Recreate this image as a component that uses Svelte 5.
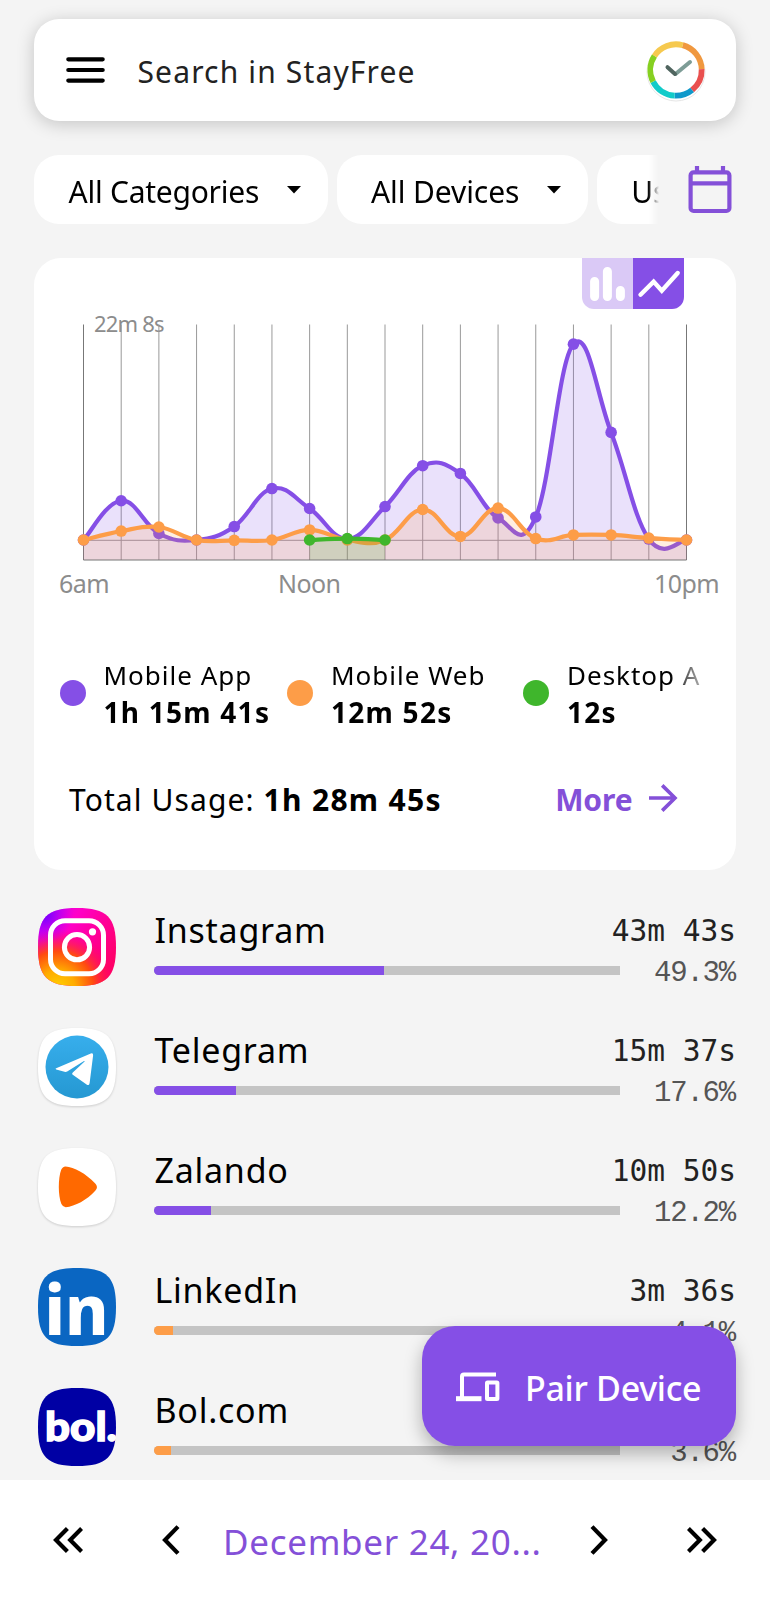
<script lang="ts">
	interface Series {
		name: string;
		total: string;
		color: string;
		start: number;
		values: number[];
	}

	const filters = ['All Categories', 'All Devices', 'Usage'];

	// usage per hour in seconds, 6am to 10pm
	const series: Series[] = [
		{
			name: 'Mobile App',
			total: '1h 15m 41s',
			color: '#854fe6',
			start: 0,
			values: [0, 242, 40, 0, 83, 317, 194, 6, 206, 458, 410, 136, 142, 1207, 663, 6, 0]
		},
		{
			name: 'Mobile Web',
			total: '12m 52s',
			color: '#fd9d48',
			start: 0,
			values: [0, 55, 80, 0, -2, 0, 62, 0, 0, 188, 22, 197, 9, 31, 31, 12, 0]
		},
		{ name: 'Desktop App', total: '12s', color: '#3fb62c', start: 6, values: [0, 9, 0] }
	];

	const apps = [
		{ id: 'instagram', name: 'Instagram', time: '43m 43s', percent: 49.3, color: '#854fe6' },
		{ id: 'telegram', name: 'Telegram', time: '15m 37s', percent: 17.6, color: '#854fe6' },
		{ id: 'zalando', name: 'Zalando', time: '10m 50s', percent: 12.2, color: '#854fe6' },
		{ id: 'linkedin', name: 'LinkedIn', time: '3m 36s', percent: 4.1, color: '#fd9d48' },
		{ id: 'bol', name: 'Bol.com', time: '', percent: 3.6, color: '#fd9d48' }
	];

	// [start angle, sweep, color], clockwise from the top
	const ring: [number, number, string][] = [
		[15, 73, '#f0983f'],
		[88, 53, '#e9504f'],
		[141, 42, '#0e98ca'],
		[183, 60, '#12cbc9'],
		[243, 60, '#86d021'],
		[303, 72, '#f6c94f']
	];

	const hours = 16;
	const left = 49.5;
	const step = 603 / hours;
	const top = 15.5;
	const zero = 231;
	const bottom = 251;
	const max = 1328;
	const squircle = 'M39 0C69 0 78 9 78 39S69 78 39 78 0 69 0 39 9 0 39 0Z';

	let chartType = $state('line');

	function toPoints(s: Series) {
		return s.values.map((v, i) => ({
			x: left + (s.start + i) * step,
			y: zero - (v / max) * (zero - top)
		}));
	}

	function curve(s: Series) {
		const p = toPoints(s);
		let d = `M${p[0].x} ${p[0].y}`;
		for (let i = 1; i < p.length; i++) {
			const before = p[Math.max(i - 2, 0)];
			const prev = p[i - 1];
			const cur = p[i];
			const next = p[Math.min(i + 1, p.length - 1)];
			d += ` C${prev.x + (cur.x - before.x) * 0.2} ${prev.y + (cur.y - before.y) * 0.2}`;
			d += ` ${cur.x - (next.x - prev.x) * 0.2} ${cur.y - (next.y - prev.y) * 0.2}`;
			d += ` ${cur.x} ${cur.y}`;
		}
		return d;
	}

	function area(s: Series) {
		const p = toPoints(s);
		return `${curve(s)} L${p[p.length - 1].x} ${bottom} L${p[0].x} ${bottom} Z`;
	}
</script>

<div class="screen">
	<header class="search">
		<button class="plain" aria-label="Menu">
			<svg width="39" height="26" viewBox="0 0 39 26" stroke="#000" stroke-width="4.2" stroke-linecap="round">
				<path d="M2.3 2.3H36.7M2.3 13H36.7M2.3 23.6H36.7" />
			</svg>
		</button>
		<span class="search-text">Search in StayFree</span>
		<svg class="logo" width="64" height="64" viewBox="0 0 64 64" fill="none">
			<circle cx="32" cy="34" r="29" fill="#fff" stroke="#e6e6e6" />
			<circle cx="32" cy="32" r="29" fill="#fff" />
			{#each ring as [from, sweep, color]}
				<circle
					cx="32"
					cy="32"
					r="25.7"
					stroke={color}
					stroke-width="5.8"
					pathLength="360"
					stroke-dasharray="{sweep} {360 - sweep}"
					transform="rotate({from - 90} 32 32)"
				/>
			{/each}
			<path d="M31.5 36L46 24" stroke="#7d9c96" stroke-width="4" stroke-linecap="round" />
			<path d="M23.5 29.2L31 36" stroke="#50655f" stroke-width="4" stroke-linecap="round" />
		</svg>
	</header>

	<div class="filters">
		<div class="chips">
			{#each filters as filter}
				<button class="chip">
					{filter}
					<svg width="14" height="8" viewBox="0 0 14 8"><path d="M0 0H14L7 7.4Z" /></svg>
				</button>
			{/each}
		</div>
		<button class="plain" aria-label="Pick a date">
			<svg width="44" height="48" viewBox="0 0 44 48" fill="none" stroke="#8450d8" stroke-width="4.2">
				<rect x="2.6" y="6.4" width="38.8" height="38.6" rx="3" />
				<path d="M2 17.3H42M9 0V7M35 0V7" />
			</svg>
		</button>
	</div>

	<section class="card">
		<div class="toggle">
			<button
				class="plain tab"
				class:selected={chartType === 'bar'}
				onclick={() => (chartType = 'bar')}
				aria-label="Bar chart"
			>
				<svg width="51" height="51" viewBox="0 0 51 51" stroke="#fff" stroke-width="9" stroke-linecap="round">
					<path d="M12.6 23.5V38.5M25.4 13.5V38.5M38.4 32.5V38.5" />
				</svg>
			</button>
			<button
				class="plain tab"
				class:selected={chartType === 'line'}
				onclick={() => (chartType = 'line')}
				aria-label="Line chart"
			>
				<svg width="51" height="51" viewBox="0 0 51 51" fill="none" stroke="#fff" stroke-width="4.4" stroke-linecap="round">
					<path d="M7.5 36.7L20.6 23.6L28.8 32.8L44.7 15" />
				</svg>
			</button>
		</div>

		<svg class="chart" width="702" height="296" viewBox="0 0 702 296">
			<text class="max-label" x="60" y="22.7">22m 8s</text>
			{#each Array(hours + 1) as _, i}
				<path
					class="grid"
					class:edge={i === 0 || i === hours}
					d="M{left + i * step} {top}V{bottom}"
				/>
			{/each}
			<path class="grid" d="M{left} {zero + 0.3}H{left + hours * step}" />
			{#each series as s}
				<path d={area(s)} fill={s.color} fill-opacity="0.17" />
				<path d={curve(s)} fill="none" stroke={s.color} stroke-width="4.2" />
				{#each toPoints(s) as p}
					<circle cx={p.x} cy={p.y} r="5.8" fill={s.color} />
				{/each}
			{/each}
			<path class="grid edge" d="M{left} {bottom}H{left + hours * step}" />
			<text class="axis" x="50" y="283.7">6am</text>
			<text class="axis" x="275.2" y="283.7">Noon</text>
			<text class="axis" x="652.5" y="283.7">10pm</text>
		</svg>

		<div class="legend">
			{#each series as s}
				<div class="legend-item">
					<svg width="26" height="26"><circle cx="13" cy="13" r="13" fill={s.color} /></svg>
					<div class="legend-text">
						<div class="legend-name">{s.name}</div>
						<div class="legend-total">{s.total}</div>
					</div>
				</div>
			{/each}
		</div>

		<div class="summary">
			<span class="total">Total Usage: <b>1h 28m 45s</b></span>
			<button class="plain more">
				More
				<svg width="29" height="28" viewBox="0 0 29 28" fill="none" stroke="#8450d8" stroke-width="3.6">
					<path d="M0 14H26M13.2 1.4L26 14L13.2 26.6" />
				</svg>
			</button>
		</div>
	</section>

	<main class="apps">
		{#each apps as app}
			<div class="app">
				<svg class="app-icon {app.id}" width="78" height="78" viewBox="0 0 78 78">
					{#if app.id === 'instagram'}
						<defs>
							<linearGradient id="ig-base" x1="0" y1="0" x2="1" y2="0.6">
								<stop offset="0" stop-color="#c800ff" />
								<stop offset="0.4" stop-color="#ff00c8" />
								<stop offset="1" stop-color="#ff0069" />
							</linearGradient>
							<radialGradient id="ig-warm" cx="0.25" cy="1.02" r="0.75">
								<stop offset="0" stop-color="#ffd000" />
								<stop offset="0.3" stop-color="#ffab00" />
								<stop offset="0.62" stop-color="#ff4b10" />
								<stop offset="1" stop-color="#ff0060" stop-opacity="0" />
							</radialGradient>
							<radialGradient id="ig-violet" cx="0.08" cy="0.08" r="0.38">
								<stop offset="0" stop-color="#6a00ff" />
								<stop offset="1" stop-color="#b400ff" stop-opacity="0" />
							</radialGradient>
						</defs>
						<path d={squircle} fill="url(#ig-base)" />
						<path d={squircle} fill="url(#ig-warm)" />
						<path d={squircle} fill="url(#ig-violet)" />
						<g fill="none" stroke="#fff" stroke-width="5">
							<rect x="12.5" y="12.8" width="53" height="53" rx="14.5" />
							<circle cx="39" cy="39.2" r="12.6" />
						</g>
						<circle cx="54.5" cy="23.8" r="3.6" fill="#fff" />
					{:else if app.id === 'telegram'}
						<defs>
							<linearGradient id="tg" x1="0" y1="0" x2="0" y2="1">
								<stop offset="0" stop-color="#37aeec" />
								<stop offset="1" stop-color="#2598d2" />
							</linearGradient>
						</defs>
						<path d={squircle} fill="#fff" />
						<circle cx="39" cy="39" r="31.5" fill="url(#tg)" />
						<path
							fill="#fff"
							d="M18.2 40.2L52.8 25.4Q55.4 24.6 55.1 27.4L51.6 55.2Q51 58.2 48.6 56.5L34.4 46.4Q33.7 45.4 34.8 44.4L46.6 33.4Q47 32.6 46 33.1L29.2 43.5Q28 44.2 26.5 43.8L18.2 41.4Q16.8 40.8 18.2 40.2Z"
						/>
					{:else if app.id === 'zalando'}
						<path d={squircle} fill="#fff" />
						<path
							fill="#ff6900"
							d="M27.5 18.4C36 18.8 48 25.6 57 35.2C59.6 38.2 59.6 40.2 57 43C49 52 37 58.4 27.7 59.2Q24.8 59 23.4 56C20 47.5 20 30.5 23.2 21.8Q24.5 18.6 27.5 18.4Z"
						/>
					{:else if app.id === 'linkedin'}
						<path d={squircle} fill="#0a66c2" />
						<text x="6.5" y="67.3" textLength="64" lengthAdjust="spacingAndGlyphs">in</text>
					{:else}
						<path d={squircle} fill="#0000a4" />
						<text x="7" y="53" textLength="72" lengthAdjust="spacingAndGlyphs">bol.</text>
					{/if}
				</svg>
				<div class="app-body">
					<div class="app-name">{app.name}</div>
					<div class="bar">
						<div class="bar-fill" style="width: {app.percent}%; background: {app.color}"></div>
					</div>
				</div>
				<div class="app-stats">
					<div class="app-time">{app.time}</div>
					<div class="app-percent">{app.percent}%</div>
				</div>
			</div>
		{/each}
	</main>

	<button class="pair">
		<svg width="44" height="30" viewBox="0 0 44 30" fill="none" stroke="#fff" stroke-width="4">
			<path d="M40 2.6H8Q6 2.6 6 4.6V26" />
			<path d="M0 26.7H25.5" stroke-width="5" />
			<rect x="31" y="10.4" width="10.4" height="16.6" rx="0.5" />
		</svg>
		Pair Device
	</button>

	<nav class="dates">
		<svg width="30" height="26" viewBox="0 0 30 26"><path d="M14.4 1.5L3 13L14.4 24.5M28.6 1.5L17.2 13L28.6 24.5" /></svg>
		<svg class="prev" width="18" height="30" viewBox="0 0 18 30"><path d="M16 1.6L3 15L16 28.4" /></svg>
		<span class="date">December 24, 20...</span>
		<svg class="next" width="18" height="30" viewBox="0 0 18 30"><path d="M2 1.6L15 15L2 28.4" /></svg>
		<svg width="30" height="26" viewBox="0 0 30 26"><path d="M1.4 1.5L12.8 13L1.4 24.5M15.6 1.5L27 13L15.6 24.5" /></svg>
	</nav>
</div>

<style>
	:global(body) {
		margin: 0;
		background: #f4f4f4;
	}

	.screen {
		position: relative;
		display: flex;
		flex-direction: column;
		width: 770px;
		height: 1600px;
		padding: 18.5px 34px 0;
		box-sizing: border-box;
		overflow: hidden;
		background: #f4f4f4;
		color: #000;
		font-family: 'Noto Sans', sans-serif;
		white-space: nowrap;
	}

	svg {
		display: block;
		flex-shrink: 0;
	}

	.plain {
		padding: 0;
		border: none;
		background: none;
	}

	.search {
		display: flex;
		align-items: center;
		flex-shrink: 0;
		height: 102.5px;
		padding: 0 28px 0 32px;
		box-sizing: border-box;
		border-radius: 25px;
		background: #fff;
		box-shadow: 0 3px 18px rgba(0, 0, 0, 0.2);
	}

	.search-text {
		flex: 1;
		padding: 4px 0 0 32.5px;
		font-size: 30px;
		letter-spacing: 1.15px;
		color: #222;
	}

	.filters {
		display: flex;
		align-items: center;
		justify-content: space-between;
		flex-shrink: 0;
		height: 69px;
		margin-top: 34px;
		padding-right: 4px;
	}

	.chips {
		display: flex;
		gap: 8.5px;
		width: 626px;
		overflow: hidden;
		mask-image: linear-gradient(to right, #000 614px, transparent 625px);
	}

	.chip {
		display: flex;
		align-items: center;
		gap: 28px;
		flex-shrink: 0;
		height: 69px;
		padding: 4px 27px 0 34.5px;
		border: none;
		border-radius: 25px;
		background: #fff;
		color: #000;
		font: 30px 'Noto Sans', sans-serif;
		letter-spacing: -0.25px;
	}

	.chip svg {
		margin-top: -3px;
	}

	.chip:nth-child(2) {
		letter-spacing: -0.1px;
	}

	.card {
		flex-shrink: 0;
		height: 612px;
		margin-top: 34px;
		border-radius: 27px;
		background: #fff;
	}

	.toggle {
		display: flex;
		width: 102px;
		height: 51px;
		margin-left: 548px;
		overflow: hidden;
		border-radius: 0 0 12px 12px;
	}

	.tab {
		background: #dac9f6;
	}

	.tab.selected {
		background: #854fe6;
	}

	.grid {
		stroke: #999;
		stroke-width: 1;
	}

	.grid.edge {
		stroke: #777;
	}

	.max-label {
		font-size: 22px;
		letter-spacing: -0.8px;
		fill: #8c8c8c;
	}

	.axis {
		font-size: 25px;
		letter-spacing: -0.6px;
		text-anchor: middle;
		fill: #8c8c8c;
	}

	.legend {
		display: flex;
		width: 641px;
		margin: 50px 0 0 25.5px;
		overflow: hidden;
		mask-image: linear-gradient(to right, #000 610px, transparent 655px);
	}

	.legend-item {
		display: flex;
		align-items: center;
		flex-shrink: 0;
		gap: 18px;
		width: 227.5px;
		line-height: 37px;
	}

	.legend-item:nth-child(2) {
		width: 236px;
	}

	.legend-item:nth-child(3) {
		width: 178px;
		overflow: hidden;
	}

	.legend-text {
		padding-top: 2px;
	}

	.legend-name {
		font-size: 26px;
		letter-spacing: 1px;
	}

	.legend-total {
		font-size: 28px;
		font-weight: 700;
		letter-spacing: 1.25px;
	}

	.summary {
		display: flex;
		align-items: center;
		justify-content: space-between;
		height: 40px;
		margin: 48px 58.5px 0 35px;
		font-size: 30px;
	}

	.total {
		letter-spacing: 1.1px;
	}

	.total b {
		letter-spacing: 1.3px;
	}

	.more {
		display: flex;
		align-items: center;
		gap: 16px;
		padding-top: 1px;
		color: #8450d8;
		font: 700 30px/40px 'Noto Sans', sans-serif;
		letter-spacing: -0.1px;
	}

	.more svg {
		margin-top: -3px;
	}

	.apps {
		display: flex;
		flex-direction: column;
		gap: 41.9px;
		padding: 38px 0 0 4px;
	}

	.app {
		display: flex;
		flex-shrink: 0;
		height: 78px;
	}

	.app-icon.telegram,
	.app-icon.zalando {
		filter: drop-shadow(0 1px 1px rgba(0, 0, 0, 0.16));
	}

	.app-icon text {
		fill: #fff;
		font: 800 70px 'Noto Sans', sans-serif;
	}

	.app-icon.bol text {
		font: 900 40px Lato, sans-serif;
		stroke: #fff;
		stroke-width: 1.4px;
	}

	.app-body {
		flex-shrink: 0;
		width: 466px;
		margin-left: 38px;
	}

	.app-name {
		height: 58.4px;
		padding-left: 0.5px;
		font-size: 34px;
		line-height: 45.5px;
		letter-spacing: 0.75px;
	}

	.bar {
		height: 8.6px;
		border-radius: 5px 0 0 5px;
		overflow: hidden;
		background: #c4c4c4;
	}

	.bar-fill {
		height: 100%;
	}

	.app-stats {
		display: flex;
		flex: 1;
		flex-direction: column;
		align-items: flex-end;
		min-width: 0;
	}

	.app-time {
		flex-shrink: 0;
		height: 48px;
		font: 29.5px/46px 'DejaVu Sans Mono', monospace;
		color: #222;
	}

	.app-percent {
		flex-shrink: 0;
		padding-right: 1px;
		font: 29px/36px 'Liberation Mono', monospace;
		letter-spacing: -1.2px;
		color: #555;
	}

	.pair {
		position: absolute;
		right: 34px;
		bottom: 154.5px;
		display: flex;
		align-items: center;
		gap: 25px;
		width: 314px;
		height: 119.5px;
		padding: 5px 0 0 34px;
		border: none;
		border-radius: 33px;
		background: #854fe6;
		color: #fff;
		box-shadow: 0 8px 18px rgba(0, 0, 0, 0.28);
		font: 500 34px 'Noto Sans', sans-serif;
		letter-spacing: -0.3px;
	}

	.pair svg {
		margin-top: -2px;
	}

	.dates {
		position: absolute;
		left: 0;
		right: 0;
		bottom: 0;
		display: flex;
		align-items: center;
		height: 120px;
		padding: 0 53px;
		box-sizing: border-box;
		background: #fff;
	}

	.dates path {
		fill: none;
		stroke: #000;
		stroke-width: 4.2;
	}

	.prev {
		margin-left: 79px;
	}

	.next {
		margin-right: 79px;
	}

	.date {
		flex: 1;
		padding: 3px 0 0 43px;
		color: #8450d8;
		font-size: 35px;
		letter-spacing: 0.7px;
	}
</style>
